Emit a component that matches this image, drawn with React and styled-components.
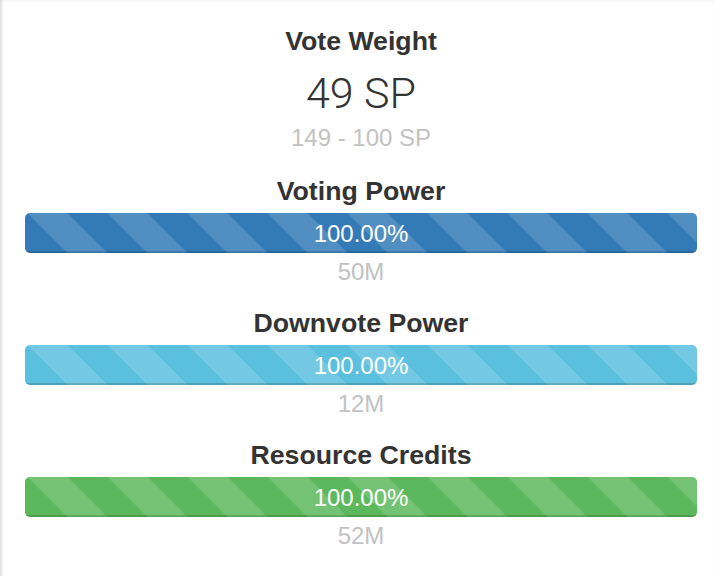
import React from 'react'
import styled, { createGlobalStyle } from 'styled-components'

const GlobalStyle = createGlobalStyle`
  html, body {
    margin: 0;
    padding: 0;
    background: #fff;
  }
  body {
    font-family: "Liberation Sans", Arial, Helvetica, sans-serif;
    color: #333;
  }
`

const Panel = styled.div`
  box-sizing: border-box;
  min-height: 100vh;
  padding: 26px 17px 0 25px;
  background: #fff;
  box-shadow: inset 3px 0 2px -1px rgba(0, 0, 0, 0.12),
    inset 0 2px 3px -1px rgba(0, 0, 0, 0.05);
  text-align: center;
`

const Heading = styled.div`
  font-size: 26.7px;
  font-weight: 700;
  line-height: 30px;
  color: #333;
`

const BigValue = styled.div`
  margin-top: 13px;
  font-family: Roboto, "Liberation Sans", sans-serif;
  font-size: 43px;
  font-weight: 300;
  line-height: 48px;
  color: #333;
`

const Muted = styled.div`
  font-size: 24px;
  line-height: ${p => p.$lh || 30}px;
  margin-top: ${p => p.$mt || 0}px;
  color: #c2c2c2;
`

const Meter = styled.section`
  margin-top: ${p => p.$first ? 23 : 17}px;
`

const Track = styled.div`
  margin-top: 7px;
  height: 40px;
  border-radius: 5px;
  overflow: hidden;
  background: #f5f5f5;
`

const colors = {
  primary: '#337ab7',
  info: '#5bc0de',
  success: '#5cb85c',
}

const Bar = styled.div`
  height: 100%;
  background-color: ${p => colors[p.$kind]};
  background-image: linear-gradient(
    45deg,
    rgba(255, 255, 255, 0.15) 25%,
    transparent 25%,
    transparent 50%,
    rgba(255, 255, 255, 0.15) 50%,
    rgba(255, 255, 255, 0.15) 75%,
    transparent 75%,
    transparent
  );
  background-size: 80px 80px;
  background-position: 3px 0;
  box-shadow: inset 0 -2px 0 rgba(0, 0, 0, 0.15);
  color: #fff;
  font-size: 24px;
  line-height: 41px;
`

const meters = [
  { title: 'Voting Power', kind: 'primary', pct: 100, sub: '50M' },
  { title: 'Downvote Power', kind: 'info', pct: 100, sub: '12M' },
  { title: 'Resource Credits', kind: 'success', pct: 100, sub: '52M' },
]

export default function App() {
  return (
    <>
      <GlobalStyle />
      <Panel>
        <Heading>Vote Weight</Heading>
        <BigValue>49 SP</BigValue>
        <Muted $mt={6}>149 - 100 SP</Muted>

        {meters.map((m, i) => (
          <Meter key={m.title} $first={i === 0}>
            <Heading>{m.title}</Heading>
            <Track>
              <Bar $kind={m.kind} style={{ width: m.pct + '%' }}>
                {m.pct.toFixed(2)}%
              </Bar>
            </Track>
            <Muted $lh={38}>{m.sub}</Muted>
          </Meter>
        ))}
      </Panel>
    </>
  )
}
